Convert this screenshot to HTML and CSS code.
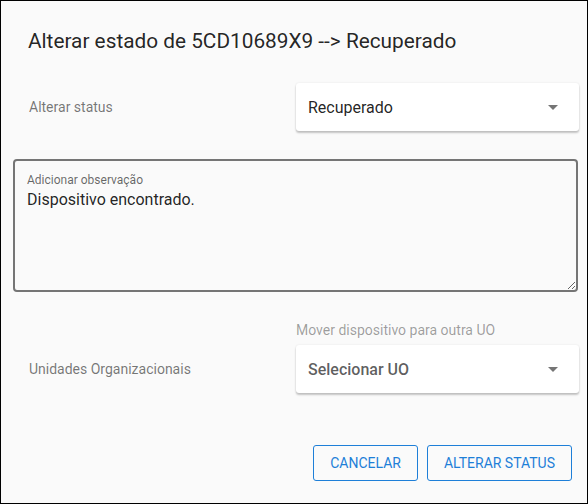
FILE: index.html
```html
<!DOCTYPE html>
<html lang="pt">
<head>
<meta charset="utf-8">
<title>Alterar estado</title>
<link rel="stylesheet" href="styles.css">
</head>
<body>
<div class="dialog">
  <h2 class="title">Alterar estado de 5CD10689X9 --&gt; Recuperado</h2>

  <div class="row">
    <div class="label">Alterar status</div>
    <div class="field">
      <div class="select">
        <span class="value">Recuperado</span>
        <span class="arrow"></span>
      </div>
    </div>
  </div>

  <div class="textbox">
    <span class="tb-label">Adicionar observação</span>
    <textarea class="tb-input">Dispositivo encontrado.</textarea>
  </div>

  <div class="row row-end">
    <div class="label">Unidades Organizacionais</div>
    <div class="field">
      <div class="hint">Mover dispositivo para outra UO</div>
      <div class="select">
        <span class="value placeholder">Selecionar UO</span>
        <span class="arrow"></span>
      </div>
    </div>
  </div>

  <div class="actions">
    <button class="btn">CANCELAR</button>
    <button class="btn">ALTERAR STATUS</button>
  </div>
</div>
</body>
</html>
```

FILE: styles.css
```css
html, body {
  margin: 0;
  padding: 0;
}

body {
  font-family: Roboto, "Liberation Sans", Arial, sans-serif;
  background: #fafafa;
}

.dialog {
  width: 588px;
  height: 504px;
  box-sizing: border-box;
  border: 1px solid #000;
  background: #fafafa;
  padding: 0 8px 0 12px;
  display: flex;
  flex-direction: column;
}

.title {
  margin: 24px 0 0 0;
  padding-left: 15px;
  font-size: 20.8px;
  font-weight: 400;
  line-height: 32px;
  color: rgba(0, 0, 0, 0.87);
}

.row {
  display: flex;
  align-items: center;
  margin-top: 26px;
}

.row-end {
  align-items: flex-end;
  margin-top: 28px;
}

.label {
  flex: 1;
  padding-left: 16px;
  font-size: 14px;
  line-height: 48px;
  height: 48px;
  color: rgba(0, 0, 0, 0.54);
}

.field {
  width: 283px;
  display: flex;
  flex-direction: column;
}

.hint {
  font-size: 14px;
  line-height: 20px;
  color: rgba(0, 0, 0, 0.38);
  margin-bottom: 5px;
}

.select {
  height: 48px;
  background: #fff;
  border-radius: 3px;
  box-shadow: 0 2px 2px rgba(0, 0, 0, 0.22), 0 0 2px rgba(0, 0, 0, 0.10);
  display: flex;
  align-items: center;
  padding: 0 21px 0 12px;
}

.value {
  flex: 1;
  font-size: 16px;
  color: rgba(0, 0, 0, 0.87);
}

.placeholder {
  font-weight: 500;
  color: rgba(0, 0, 0, 0.64);
}

.arrow {
  width: 0;
  height: 0;
  border-left: 5px solid transparent;
  border-right: 5px solid transparent;
  border-top: 5px solid rgba(0, 0, 0, 0.54);
}

.textbox {
  margin-top: 28px;
  height: 133px;
  box-sizing: border-box;
  border: 2px solid #757575;
  border-radius: 4px;
  margin-right: 1px;
  display: flex;
  flex-direction: column;
}

.tb-label {
  padding: 11px 0 0 12px;
  font-size: 12px;
  line-height: 16px;
  color: rgba(0, 0, 0, 0.6);
}

.tb-input {
  flex: 1;
  border: none;
  outline: none;
  background: transparent;
  margin: 0;
  padding: 0 12px;
  font-family: Roboto, "Liberation Sans", Arial, sans-serif;
  font-size: 16px;
  line-height: 24px;
  color: rgba(0, 0, 0, 0.87);
  resize: both;
}

.actions {
  display: flex;
  justify-content: flex-end;
  gap: 9px;
  margin-top: 52px;
  margin-right: 7px;
}

.btn {
  height: 36px;
  padding: 0 16px;
  background: transparent;
  border: 1px solid #1e7fd8;
  border-radius: 3px;
  font-family: Roboto, "Liberation Sans", Arial, sans-serif;
  font-size: 14px;
  color: #1e7fd8;
  cursor: pointer;
}
```
